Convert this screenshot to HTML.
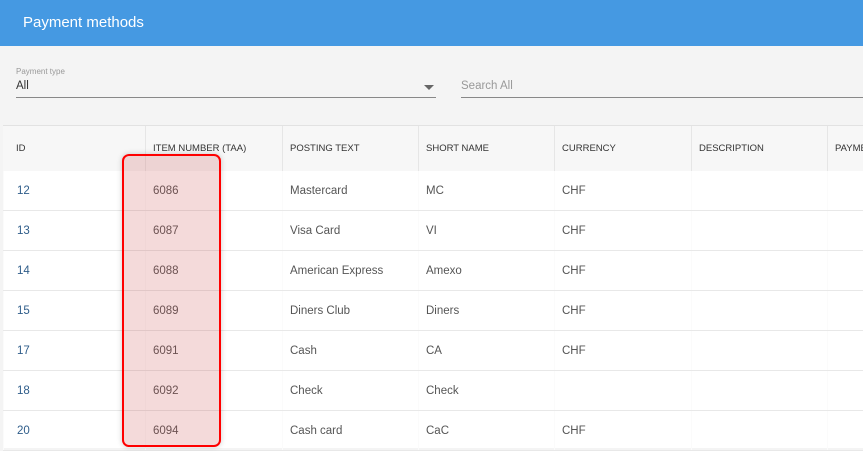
<!DOCTYPE html>
<html><head><meta charset="utf-8"><style>
*{margin:0;padding:0;box-sizing:border-box}
body{width:863px;height:448px;overflow:hidden;background:#f4f4f4;font-family:"Liberation Sans",sans-serif;position:relative}
.top{position:absolute;left:0;top:0;width:863px;height:46px;background:#4599e2;color:#fff;font-size:15px;padding:14px 0 0 23px}
.lbl{position:absolute;left:16px;top:67px;font-size:8px;color:#999}
.sel{position:absolute;left:16px;top:78px;width:420px;height:20px;border-bottom:1px solid #888;font-size:11.5px;color:#333;padding-top:2px}
.arr{position:absolute;right:2px;top:7px;width:0;height:0;border-left:5px solid transparent;border-right:5px solid transparent;border-top:5px solid #666}
.srch{position:absolute;left:461px;top:78px;width:402px;height:20px;border-bottom:1px solid #888;font-size:11.5px;color:#999;padding-top:2px}
.tbl{position:absolute;left:3px;top:125px;width:860px;height:323px;background:#fff;border-top:1px solid #e2e2e2}
.row{position:absolute;left:0;width:860px;border-bottom:1px solid #e8e8e8}
.hd{top:0;height:46px;background:#f7f7f7;font-size:9.5px;color:#333}
.c{position:absolute;top:0;height:100%;padding-left:7px}
.hd .c{border-left:1px solid #e6e6e6;line-height:45px}
.bd{height:40px;font-size:11.5px;color:#555}
.bd .c{line-height:40px;border-left:1px solid #fbfbfb}
.id{color:#2f5d8a}
.hl{position:absolute;left:122px;top:154px;width:99px;height:293px;border:2px solid #f00;border-radius:7px;background:rgba(200,70,70,0.2);box-shadow:0 0 6px rgba(0,0,0,.2)}
</style></head><body>
<div class="top">Payment methods</div>
<div class="lbl">Payment type</div>
<div class="sel">All<div class="arr"></div></div>
<div class="srch">Search All</div>
<div class="tbl">
<div class="row hd">
<div class="c" style="left:0;border-left:none;padding-left:13px">ID</div>
<div class="c" style="left:142px">ITEM NUMBER (TAA)</div>
<div class="c" style="left:279px">POSTING TEXT</div>
<div class="c" style="left:415px">SHORT NAME</div>
<div class="c" style="left:551px">CURRENCY</div>
<div class="c" style="left:688px">DESCRIPTION</div>
<div class="c" style="left:824px">PAYMENT</div>
</div>
</div>
<div class="tbl" style="top:171px;height:277px;border-top:none">
<div class="row bd" style="top:0"><div class="c id" style="left:0;padding-left:13px">12</div><div class="c" style="left:142px">6086</div><div class="c" style="left:279px">Mastercard</div><div class="c" style="left:415px">MC</div><div class="c" style="left:551px">CHF</div><div class="c" style="left:688px"></div><div class="c" style="left:824px"></div></div>
<div class="row bd" style="top:40px"><div class="c id" style="left:0;padding-left:13px">13</div><div class="c" style="left:142px">6087</div><div class="c" style="left:279px">Visa Card</div><div class="c" style="left:415px">VI</div><div class="c" style="left:551px">CHF</div><div class="c" style="left:688px"></div><div class="c" style="left:824px"></div></div>
<div class="row bd" style="top:80px"><div class="c id" style="left:0;padding-left:13px">14</div><div class="c" style="left:142px">6088</div><div class="c" style="left:279px">American Express</div><div class="c" style="left:415px">Amexo</div><div class="c" style="left:551px">CHF</div><div class="c" style="left:688px"></div><div class="c" style="left:824px"></div></div>
<div class="row bd" style="top:120px"><div class="c id" style="left:0;padding-left:13px">15</div><div class="c" style="left:142px">6089</div><div class="c" style="left:279px">Diners Club</div><div class="c" style="left:415px">Diners</div><div class="c" style="left:551px">CHF</div><div class="c" style="left:688px"></div><div class="c" style="left:824px"></div></div>
<div class="row bd" style="top:160px"><div class="c id" style="left:0;padding-left:13px">17</div><div class="c" style="left:142px">6091</div><div class="c" style="left:279px">Cash</div><div class="c" style="left:415px">CA</div><div class="c" style="left:551px">CHF</div><div class="c" style="left:688px"></div><div class="c" style="left:824px"></div></div>
<div class="row bd" style="top:200px"><div class="c id" style="left:0;padding-left:13px">18</div><div class="c" style="left:142px">6092</div><div class="c" style="left:279px">Check</div><div class="c" style="left:415px">Check</div><div class="c" style="left:551px"></div><div class="c" style="left:688px"></div><div class="c" style="left:824px"></div></div>
<div class="row bd" style="top:240px"><div class="c id" style="left:0;padding-left:13px">20</div><div class="c" style="left:142px">6094</div><div class="c" style="left:279px">Cash card</div><div class="c" style="left:415px">CaC</div><div class="c" style="left:551px">CHF</div><div class="c" style="left:688px"></div><div class="c" style="left:824px"></div></div>
</div>
<div class="hl"></div>
</body></html>
